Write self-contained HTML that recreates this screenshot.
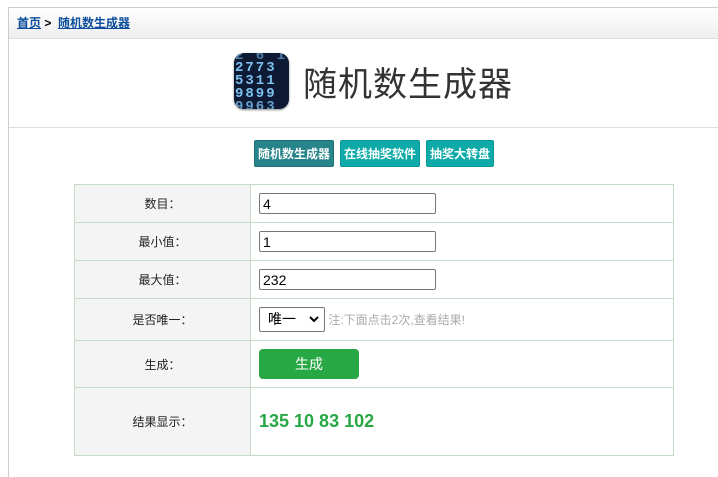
<!DOCTYPE html>
<html><head><meta charset="utf-8"><style>
body{margin:0;background:#fff;font-family:"Liberation Sans","Noto Sans CJK SC",sans-serif;width:718px;height:477px;overflow:hidden;position:relative}
.wrap{position:absolute;left:8px;top:7px;right:0;bottom:0;border-left:1px solid #ccc;border-top:1px solid #ccc}
.bc{height:30px;background:linear-gradient(#fff,#eee);border-bottom:1px solid #ddd;font-size:12px;font-weight:bold;line-height:30px;padding-left:8px}
.bc a{color:#0b4d9c;text-decoration:underline}
.hd{height:88px;border-bottom:1px solid #ddd;position:relative}
.ic{position:absolute;left:225px;top:14px;width:55px;height:56px;border-radius:10px;background:#0e1a33;overflow:hidden;box-shadow:0 1px 2px #888}
.ic span{position:absolute;color:#7cc0f0;font:bold 14px "Liberation Mono",monospace;letter-spacing:2px;line-height:14px;left:1px}
.tt{position:absolute;left:294px;top:20px;font-size:34px;color:#333;font-family:"Noto Sans CJK SC",sans-serif;line-height:46px;letter-spacing:1px}
.btn{position:absolute;top:140px;height:27px;line-height:27px;font-size:12px;color:#fff;font-weight:bold;text-align:center;border-radius:2px;background:#0eaaa8;border:1px solid #0c9896;box-sizing:border-box}
table{position:absolute;left:74px;top:184px;width:600px;border-collapse:collapse;font-size:12px}
td{border:1px solid #c6dcc9;padding:0}
td.l{width:175px;background:#f4f4f4;text-align:center;color:#222}
td.r{padding-left:8px}
input{width:177px;height:21px;box-sizing:border-box;border:1px solid #777;border-radius:2px;font:14px "Liberation Sans",sans-serif;padding:0 3px;margin:0}
.sel{display:inline-block;width:66px;height:25px;box-sizing:border-box;border:1px solid #777;border-radius:2px;font-size:14px;line-height:23px;padding-left:8px;vertical-align:middle;position:relative}
.sel svg{position:absolute;right:5px;top:8px}
.note{color:#aaa;font-size:12px;vertical-align:middle}
.gen{display:inline-block;width:100px;height:30px;background:#28a745;border-radius:4px;color:#fff;text-align:center;line-height:30px;font-size:14px}
.res{color:#28a745;font-weight:bold;font-size:18px}
</style></head><body>
<div class="wrap">
<div class="bc"><a>首页</a> &gt; &nbsp;<a>随机数生成器</a></div>
<div class="hd">
<div class="ic"><span style="top:-4px;opacity:.6">2 6 1</span><span style="top:8px">2773</span><span style="top:21px">5311</span><span style="top:34px">9899</span><span style="top:47px;opacity:.8">9963</span></div>
<div class="tt">随机数生成器</div>
</div>
</div>
<div class="btn" style="left:254px;width:80px;background:#26848a;border-color:#1f6f74">随机数生成器</div>
<div class="btn" style="left:340px;width:80px">在线抽奖软件</div>
<div class="btn" style="left:426px;width:68px">抽奖大转盘</div>
<table>
<tr style="height:38px"><td class="l">数目：</td><td class="r"><input value="4"></td></tr>
<tr style="height:38px"><td class="l">最小值：</td><td class="r"><input value="1"></td></tr>
<tr style="height:38px"><td class="l">最大值：</td><td class="r"><input value="232"></td></tr>
<tr style="height:42px"><td class="l">是否唯一：</td><td class="r"><span class="sel">唯一<svg width="10" height="7" viewBox="0 0 10 7"><path d="M1 1l4 4 4-4" fill="none" stroke="#000" stroke-width="2"/></svg></span> <span class="note">注:下面点击2次,查看结果!</span></td></tr>
<tr style="height:47px"><td class="l">生成：</td><td class="r"><span class="gen">生成</span></td></tr>
<tr style="height:68px"><td class="l">结果显示：</td><td class="r"><span class="res">135 10 83 102</span></td></tr>
</table>
</body></html>
